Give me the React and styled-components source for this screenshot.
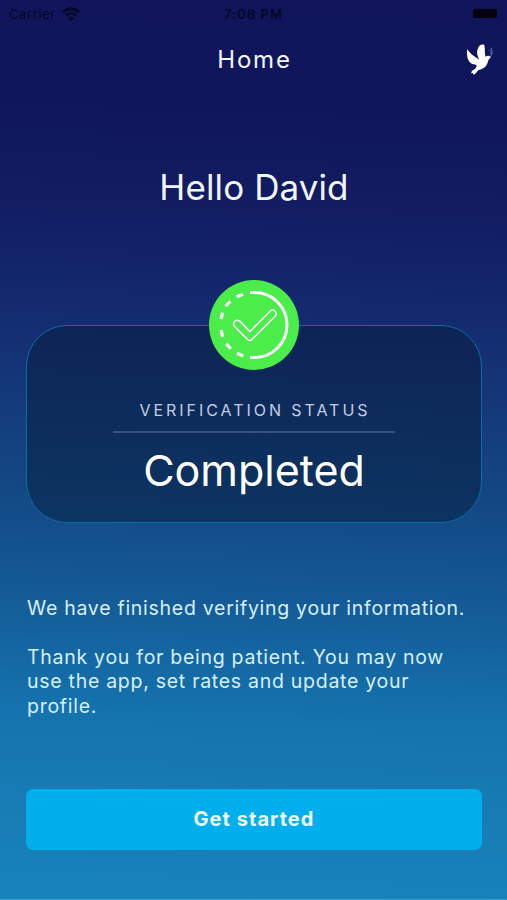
import styled, { createGlobalStyle } from 'styled-components';

const GlobalStyle = createGlobalStyle`
  * {
    box-sizing: border-box;
  }

  body {
    margin: 0;
    font-family: Inter, 'Liberation Sans', sans-serif;
  }
`;

const Screen = styled.main`
  display: flex;
  flex-direction: column;
  height: 900px;
  overflow: hidden;
  color: #f2f6ff;
  border-bottom: 1px solid #3c9ad2;
  background: linear-gradient(
    182deg,
    #10155b 0%,
    #10165c 13%,
    #121d62 24%,
    #142a6f 35%,
    #143b7b 46%,
    #134b87 57%,
    #145a96 66%,
    #1469a4 74%,
    #1574ae 80%,
    #187bb3 88%,
    #1783bd 100%
  );
`;

const StatusBar = styled.div`
  display: grid;
  grid-template-columns: 1fr auto 1fr;
  align-items: center;
  height: 28px;
  padding: 0 10px 0 9px;
  color: #050726;
  font-size: 13px;
`;

const Carrier = styled.div`
  display: flex;
  align-items: center;
  gap: 6px;
  letter-spacing: 0.6px;
`;

const Time = styled.div`
  margin-left: 1px;
  font-weight: 600;
  letter-spacing: 1px;
`;

const Battery = styled.div`
  justify-self: end;
  width: 24px;
  height: 9px;
  margin-bottom: 2px;
  border-radius: 2px;
  background: #02030f;
`;

const Header = styled.header`
  display: grid;
  grid-template-columns: 1fr auto 1fr;
  align-items: center;
  height: 64px;
  padding: 0 12px;
`;

const Title = styled.h1`
  grid-column: 2;
  margin: 0 0 1px 2px;
  font-size: 24px;
  font-weight: 400;
  letter-spacing: 1.8px;
`;

const DoveIcon = styled.svg`
  justify-self: end;
  width: 30px;
  height: 35px;
  margin-bottom: 2px;
`;

const Content = styled.section`
  display: flex;
  flex-direction: column;
  padding: 0 25px 0 26px;
`;

const Greeting = styled.h2`
  margin: 73px 0 0;
  font-size: 35px;
  font-weight: 400;
  line-height: 44px;
  letter-spacing: 0.1px;
  text-align: center;
`;

const Card = styled.div`
  display: flex;
  flex-direction: column;
  align-items: center;
  height: 198px;
  margin-top: 116px;
  border: 1px solid #0e6d9f;
  border-radius: 41px;
  background: rgba(7, 28, 56, 0.48);
`;

const Badge = styled.svg`
  flex: none;
  width: 90px;
  height: 90px;
  margin-top: -46px;
`;

const Label = styled.div`
  width: 282px;
  height: 63px;
  padding-top: 30px;
  border-bottom: 2px solid #35517f;
  color: #c5cde0;
  font-size: 16px;
  line-height: 20px;
  letter-spacing: 2.95px;
  text-indent: 2px;
  text-align: center;
  white-space: nowrap;
`;

const Status = styled.div`
  margin-top: 10px;
  color: #ffffff;
  font-size: 43px;
  line-height: 54px;
`;

const Message = styled.div`
  margin-top: 73px;
  padding-left: 1px;
  color: #d8efff;
  font-size: 19.5px;
  line-height: 24.4px;
  letter-spacing: 0.72px;

  p {
    margin: 0 0 24.4px;
  }
`;

const Button = styled.button`
  height: 61px;
  margin-top: 47px;
  padding: 0 0 1px;
  border: none;
  border-radius: 7px;
  background: #02afec;
  color: #f0fbff;
  font-family: inherit;
  font-size: 20px;
  font-weight: 700;
  letter-spacing: 1.05px;
  cursor: pointer;
`;

function Wifi() {
  return (
    <svg width="18" height="15" viewBox="0 0 18 15" fill="none" stroke="currentColor">
      <path d="M1 5.2C5.6.6 12.4.6 17 5.2" strokeWidth="2.8" />
      <path d="M4 8.5c2.9-2.7 7.1-2.7 10 0" strokeWidth="2.6" />
      <path d="M9 14 5.9 10.9c1.7-1.6 4.5-1.6 6.2 0z" fill="currentColor" stroke="none" />
    </svg>
  );
}

function Dove() {
  return (
    <DoveIcon viewBox="55 125 90 105">
      <path
        fill="#fff"
        d="M62 146C59 165 62 182 75 190L90 194C90 203 84 207 76 211L73 219 79 218 80 223C88 221 90 214 96 209C112 206 121 198 124 183C126 176 130 174 133 170C128 165 122 166 117 169C113 162 116 149 113 134C104 129 96 137 93 146C89 155 92 168 98 178C84 168 72 163 62 146Z"
      />
      <path
        fill="none"
        stroke="#7f86bd"
        strokeWidth="2.5"
        d="M128 170C136 166 139 155 133 142M133 154l-5-6M136 160l-6-2"
      />
    </DoveIcon>
  );
}

function CheckBadge() {
  return (
    <Badge viewBox="0 0 90 90" fill="none" stroke="#fff">
      <circle cx="45" cy="45" r="45" fill="#4bed4b" stroke="none" />
      <path d="M41 12.5h4.5a32.5 32.5 0 0 1 0 65H41" strokeWidth="3" />
      <path
        d="M34 14.2 27.5 16.8M21.3 21.2 16.8 26.2M13.6 32.7 12 39M12 49.8 13.6 56.8M17.2 63.7 21.8 68.8M27.8 73.2 34.3 76"
        strokeWidth="3.2"
      />
      <path
        d="M31 41.4 40.8 51.5 61 31.2a3.6 3.6 0 0 1 5.1 5.1L43 59.4a3.2 3.2 0 0 1-4.5 0L25.6 46.5a3.6 3.6 0 0 1 5.4-5.1z"
        strokeWidth="1.6"
      />
    </Badge>
  );
}

export default function App() {
  return (
    <Screen>
      <GlobalStyle />
      <StatusBar>
        <Carrier>
          Carrier
          <Wifi />
        </Carrier>
        <Time>7:08 PM</Time>
        <Battery />
      </StatusBar>
      <Header>
        <Title>Home</Title>
        <Dove />
      </Header>
      <Content>
        <Greeting>Hello David</Greeting>
        <Card>
          <CheckBadge />
          <Label>VERIFICATION STATUS</Label>
          <Status>Completed</Status>
        </Card>
        <Message>
          <p>We have finished verifying your information.</p>
          <p>Thank you for being patient. You may now use the app, set rates and update your profile.</p>
        </Message>
        <Button>Get started</Button>
      </Content>
    </Screen>
  );
}
